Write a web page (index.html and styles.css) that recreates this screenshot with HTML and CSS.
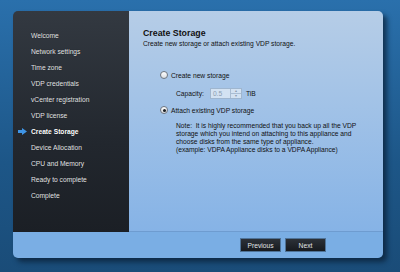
FILE: index.html
```html
<!DOCTYPE html>
<html lang="en">

<head>
    <meta charset="UTF-8">
    <meta name="viewport" content="width=device-width, initial-scale=1.0">
    <title>VDP Configuration</title>
    <link rel="stylesheet" href="styles.css">
</head>

<body>
    <div class="wizard">
        <!-- Steps -->
        <ul class="steps">
            <li>Welcome</li>
            <li>Network settings</li>
            <li>Time zone</li>
            <li>VDP credentials</li>
            <li>vCenter registration</li>
            <li>VDP license</li>
            <li class="active">
                <svg class="arrow" width="9" height="7" viewBox="0 0 9 7">
                    <path d="M0 2h4V0l5 3.5L4 7V5H0z" fill="#3f95e6" />
                </svg>Create Storage
            </li>
            <li>Device Allocation</li>
            <li>CPU and Memory</li>
            <li>Ready to complete</li>
            <li>Complete</li>
        </ul>

        <!-- Page body -->
        <div class="content">
            <h2>Create Storage</h2>
            <p class="subtitle">Create new storage or attach existing VDP storage.</p>

            <label class="option">
                <span class="radio"></span>Create new storage
            </label>

            <div class="capacity">
                <span>Capacity:</span>
                <div class="spinner">
                    <span class="value">0.5</span>
                    <div class="arrows">
                        <span>&#9652;</span>
                        <span>&#9662;</span>
                    </div>
                </div>
                <span>TiB</span>
            </div>

            <label class="option">
                <span class="radio checked"></span>Attach existing VDP storage
            </label>

            <p class="note">
                Note:&nbsp; It is highly recommended that you back up all the VDP<br>
                storage which you intend on attaching to this appliance and<br>
                choose disks from the same type of appliance.<br>
                (example: VDPA Appliance disks to a VDPA Appliance)
            </p>
        </div>

        <!-- Buttons -->
        <div class="footer">
            <button class="btn">Previous</button>
            <button class="btn">Next</button>
        </div>
    </div>
</body>

</html>
```

FILE: styles.css
```css
body {
    margin: 0;
    height: 272px;
    background: linear-gradient(#2a70ac, #1d5687 60%, #1a4c78);
    font-family: "Liberation Sans", Arial, sans-serif;
    font-size: 6.7px;
    overflow: hidden;
}

.wizard {
    margin: 11px 0 0 13px;
    width: 370px;
    height: 247px;
    border-radius: 5px;
    overflow: hidden;
    display: grid;
    grid-template-columns: 116px 1fr;
    grid-template-rows: 221px 26px;
    box-shadow: 4px 4px 5px rgba(8, 28, 50, 0.7);
}

.steps {
    margin: 0;
    padding: 17px 0 0 18px;
    list-style: none;
    background: linear-gradient(#333941, #22272e 60%, #1b1f25);
}

.steps li {
    height: 16.05px;
    line-height: 16px;
    color: #e4e6e8;
    white-space: nowrap;
    text-shadow: 0 0 1px rgba(0, 0, 0, 0.6);
}

.steps li.active {
    color: #ffffff;
    font-weight: bold;
}

.arrow {
    margin-left: -13px;
    margin-right: 4px;
    vertical-align: -1px;
}

.content {
    display: flex;
    flex-direction: column;
    align-items: flex-start;
    padding: 17px 0 0 14px;
    background: linear-gradient(#b6cde7, #a3c3e7 40%, #86b3e6);
    border-bottom: 1px solid #6e9cd0;
    color: #111;
}

h2 {
    margin: 0;
    font-size: 8.8px;
    line-height: 11px;
}

.subtitle {
    margin: 1px 0 0;
    line-height: 8px;
}

.option {
    display: flex;
    align-items: center;
    height: 10px;
    margin: 22px 0 0 17px;
}

.option + .capacity + .option {
    margin-top: 6px;
}

.radio {
    width: 6px;
    height: 6px;
    margin-right: 3px;
    border: 1px solid #6f7680;
    border-radius: 50%;
    background: linear-gradient(#ffffff, #d9dde2);
    display: flex;
    align-items: center;
    justify-content: center;
}

.radio.checked::after {
    content: "";
    width: 3px;
    height: 3px;
    border-radius: 50%;
    background: #1b1f24;
}

.capacity {
    display: flex;
    align-items: center;
    gap: 4px;
    height: 12px;
    margin: 7px 0 0 33px;
}

.spinner {
    display: flex;
    width: 32px;
    height: 11px;
    margin-left: 2px;
    border: 1px solid #9fb6cf;
    background: #d3e2f2;
    box-sizing: border-box;
}

.spinner .value {
    flex: 1;
    padding-left: 2px;
    line-height: 9px;
    color: #8c9cb0;
}

.arrows {
    width: 10px;
    display: flex;
    flex-direction: column;
    border-left: 1px solid #a9bdd3;
}

.arrows span {
    flex: 1;
    font-size: 4px;
    line-height: 4.5px;
    text-align: center;
    color: #8a99ab;
}

.arrows span + span {
    border-top: 1px solid #a9bdd3;
}

.note {
    margin: 7px 0 0 33px;
    line-height: 8.1px;
    white-space: nowrap;
}

.footer {
    grid-column: 1 / 3;
    display: flex;
    justify-content: flex-end;
    align-items: flex-start;
    gap: 4px;
    padding: 6px 57px 0 0;
    background: #7aaee4;
}

.btn {
    width: 41px;
    height: 14px;
    padding: 0;
    border: 1px solid #4f7398;
    background: linear-gradient(#2c3138, #171a1f);
    color: #e2e4e6;
    font-family: "Liberation Sans", Arial, sans-serif;
    font-size: 6.7px;
    cursor: pointer;
}

.btn:hover {
    background: #3a4048;
}
```
